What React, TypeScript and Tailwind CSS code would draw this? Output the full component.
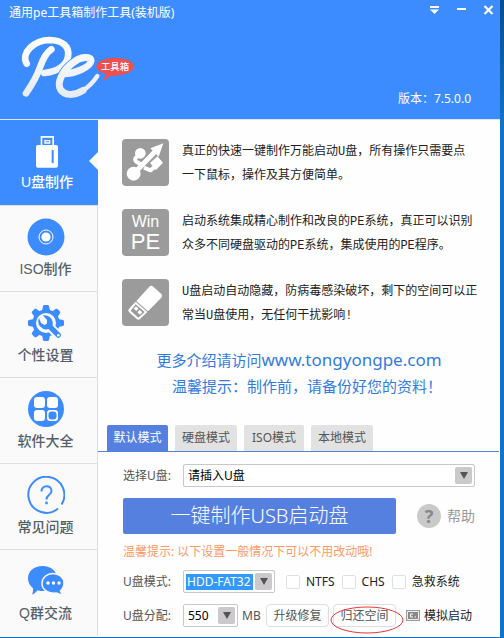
import type { ReactNode } from 'react'

const features: { icon: ReactNode; lines: string[] }[] = [
  { icon: <UsbTrident />, lines: ['真正的快速一键制作万能启动U盘，所有操作只需要点', '一下鼠标，操作及其方便简单。'] },
  { icon: <WinPe />, lines: ['启动系统集成精心制作和改良的PE系统，真正可以识别', '众多不同硬盘驱动的PE系统，集成使用的PE程序。'] },
  { icon: <FlashDrive />, lines: ['U盘启动自动隐藏，防病毒感染破坏，剩下的空间可以正', '常当U盘使用，无任何干扰影响!'] },
]

const navItems: { label: string; icon: ReactNode }[] = [
  { label: 'ISO制作', icon: <DiscIcon /> },
  { label: '个性设置', icon: <GearIcon /> },
  { label: '软件大全', icon: <AppsIcon /> },
  { label: '常见问题', icon: <QuestionIcon /> },
  { label: 'Q群交流', icon: <ChatIcon /> },
]

function Logo() {
  return (
    <svg width="120" height="68" viewBox="57 102 360 204" role="img" aria-label="Pe 工具箱">
      <defs>
        <linearGradient id="ink" gradientUnits="userSpaceOnUse" x1="0" y1="20" x2="0" y2="205">
          <stop offset="0" stopColor="#fff" />
          <stop offset="1" stopColor="#e6ebf2" />
        </linearGradient>
      </defs>
      <g transform="translate(45 90)" fill="none" strokeLinecap="round" strokeLinejoin="round">
        <path d="M35 101C16 68 60 30 103 30C146 31 164 52 159 80C154 107 130 124 88 129" stroke="url(#ink)" strokeWidth="20" />
        <path d="M109 58C93 68 84 86 75 112C66 138 50 165 33 190" stroke="url(#ink)" strokeWidth="20" />
        <path d="M149 131C177 131 226 112 228 93C229 77 196 80 174 98C142 122 124 160 137 179C149 197 178 198 204 181" stroke="#3c8cff" strokeWidth="26" strokeLinecap="butt" />
        <path d="M149 131C177 131 226 112 228 93C229 77 196 80 174 98C142 122 124 160 137 179C149 197 178 198 204 181" stroke="url(#ink)" strokeWidth="21" />
        <path d="M200 184C218 173 234 158 247 138" stroke="url(#ink)" strokeWidth="13" />
      </g>
      <path d="M309 243L318 222C300 217 289 209 289 199C289 184 314 173 345 173S402 184 402 199S377 226 345 227L332 228Z" fill="#f04f50" />
      <text x="345" y="211" textAnchor="middle" fontSize="28" fontWeight="500" fill="#fff" fontFamily="'Noto Sans CJK SC', sans-serif">工具箱</text>
    </svg>
  )
}

function UsbTrident() {
  return (
    <svg width="47" height="47" viewBox="0 0 141 141" aria-hidden="true">
      <g fill="none" stroke="#fff" strokeWidth="12" strokeLinejoin="round">
        <path d="M35 104L106 31" strokeWidth="15" />
        <path d="M54 43L41 57Q37 62 43 68L60 78" />
        <path d="M66 86L86 94L104 78" />
      </g>
      <circle cx="35" cy="104" r="21" fill="#fff" />
      <circle cx="55" cy="43" r="16" fill="#fff" />
      <path d="M124 13L85 28L110 53Z" fill="#fff" />
      <path d="M106 52L123 71L102 93L84 72Z" fill="#fff" />
    </svg>
  )
}

function WinPe() {
  return (
    <span className="flex flex-col items-center font-['Liberation_Sans',sans-serif] text-white">
      <span className="text-[16px] leading-5">Win</span>
      <span className="text-[22px] leading-5">PE</span>
    </span>
  )
}

function FlashDrive() {
  return (
    <svg width="47" height="47" viewBox="0 0 141 141" aria-hidden="true">
      <path d="M43 66L82 23Q88 17 94 23L118 45Q123 50 118 56L78 97Z" fill="#fff" />
      <path d="M41 68L76 99L54 120Q49 124 44 120L21 99Q16 94 21 89Z" fill="#fff" />
      <path d="M41 76L68 99L49 116L26 95Z" fill="#9b9b9b" />
      <path d="M42 82l8 7-7 7-8-7zM53 93l8 7-7 7-8-7z" fill="#fff" />
    </svg>
  )
}

function StickIcon() {
  return (
    <svg width="22" height="32" viewBox="0 0 66 96" aria-hidden="true">
      <path fill="#fff" fillRule="evenodd" d="M14 0H54V27H60Q66 27 66 33V89Q66 95 60 95H6Q0 95 0 89V33Q0 27 6 27H14ZM19 5V27H49V5Z" />
      <path fill="#fff" fillRule="evenodd" d="M25 12H43V23H25ZM29 16V19H39V16Z" />
      <path d="M50 44V79" stroke="#3c8cff" strokeWidth="6" strokeLinecap="round" />
    </svg>
  )
}

function DiscIcon() {
  return (
    <svg width="38" height="38" viewBox="0 0 38 38" aria-hidden="true">
      <circle cx="19" cy="19" r="18.5" fill="#3c8cff" />
      <circle cx="19" cy="19" r="7" fill="none" stroke="#fff" />
      <circle cx="19" cy="19" r="4.6" fill="#fff" />
    </svg>
  )
}

function GearIcon() {
  return (
    <svg width="38" height="38" viewBox="0 0 38 38" aria-hidden="true">
      <g fill="#3c8cff">
        <circle cx="19" cy="19" r="13.6" />
        {[0, 45, 90, 135, 180, 225, 270, 315].map((a) => (
          <path key={a} d="M15 7L16 2Q16.300 1 17.300 1H20.700Q21.700 1 22 2L23 7Z" transform={`rotate(${a} 19 19)`} />
        ))}
      </g>
      <circle cx="19" cy="19" r="10" fill="#fafafa" />
      <path d="M18 18L32 32" stroke="#fafafa" strokeWidth="9" strokeLinecap="round" />
      <path d="M12 14A8 8 0 0 0 21.500 25L29.500 33A2.600 2.600 0 0 0 33.200 29.300L25.500 21.500A8 8 0 0 0 16 11.500L20 16V19.500L17.500 21L14 19Z" fill="#3c8cff" />
      <circle cx="31.300" cy="31.300" r="1.300" fill="#fafafa" />
    </svg>
  )
}

function AppsIcon() {
  return (
    <svg width="38" height="38" viewBox="0 0 38 38" aria-hidden="true">
      <circle cx="19" cy="19" r="18" fill="#3c8cff" />
      <g fill="#fff">
        <rect x="7" y="7" width="11" height="11" rx="3" />
        <rect x="20" y="7" width="11" height="11" rx="3" />
        <rect x="7" y="20" width="11" height="11" rx="3" />
        <rect x="20" y="20" width="11" height="11" rx="3" />
      </g>
      <rect x="21.500" y="21.500" width="8" height="8" rx="3" fill="#3c8cff" />
    </svg>
  )
}

function QuestionIcon() {
  return (
    <svg width="38" height="38" viewBox="0 0 38 38" fill="none" stroke="#3c8cff" aria-hidden="true">
      <path d="M31 32.500A18 18 0 1 1 34.500 28.500" strokeWidth="2" />
      <path d="M14.500 15.500C14.500 8.500 24.500 8.500 24.500 15C24.500 19 19.500 18.500 19.500 23.500" strokeWidth="2" />
      <circle cx="19.500" cy="27" r="1.400" fill="#3c8cff" stroke="none" />
    </svg>
  )
}

function ChatIcon() {
  return (
    <svg width="38" height="32" viewBox="0 0 38 32" aria-hidden="true">
      <path d="M15.500 1C24 1 30 6 30 13.500S24 26 15.500 26C13 26 11.500 25.500 10.500 25.200C9 27.500 7 29 5 29.500C6 27.500 6.200 25.500 6 23.200C3 21 1 17.500 1 13.500C1 6 7 1 15.500 1Z" fill="#3c8cff" />
      <path d="M26 8.500C32 8.500 37 12.500 37 18C37 21.500 35.500 24 33.500 25.800L35.500 30.500L29.500 28C22 29 15 25 15 18.500C15 12.500 20 8.500 26 8.500Z" fill="#3c8cff" stroke="#fafafa" strokeWidth="1.500" />
      <g fill="#fff">
        <circle cx="21" cy="18" r="1.700" />
        <circle cx="26.500" cy="18" r="1.700" />
        <circle cx="32" cy="18" r="1.700" />
      </g>
    </svg>
  )
}

function Arrow() {
  return (
    <span className="pointer-events-none flex size-[17px] shrink-0 items-center justify-center rounded-xs bg-[#cbc9cb]">
      <svg width="8" height="7" viewBox="0 0 8 7" aria-hidden="true">
        <path d="M0 0H8L4 7Z" fill="#555" />
      </svg>
    </span>
  )
}

function Check({ label }: { label: string }) {
  return (
    <label className="flex items-center gap-[6px] text-[#222]">
      <input type="checkbox" className="size-[14px] appearance-none rounded-xs border border-[#e0e0e0] bg-white checked:bg-[#5580e0]" />
      {label}
    </label>
  )
}

const box = 'flex h-[23px] items-center justify-between rounded-xs border border-[#c8c8c8] bg-white px-[2px]'
const rowLabel = 'w-[60px] shrink-0 text-[#555]'
const smallButton = 'h-[23px] w-[63px] rounded-sm border border-[#dedede] bg-white text-[#555]'

export default function App() {
  return (
    <div className="flex min-h-screen flex-col bg-linear-to-b from-[#0a4c8f] to-[#0f74cc] to-20% pr-1 pb-px font-['Noto_Sans','Noto_Sans_CJK_SC',sans-serif] text-[12px] leading-4">
      <header className="flex h-[120px] flex-col border-b border-[#dbe8fa] bg-[#3c8cff] text-white">
        <div className="flex h-[26px] items-center justify-between pr-[6px] pl-[9px]">
          <h1>通用pe工具箱制作工具(装机版)</h1>
          <div className="flex gap-[15px] pb-[7px]">
            <button aria-label="菜单" className="flex w-3 justify-center">
              <svg width="11" height="10" viewBox="0 0 11 10" fill="#fff"><path d="M1 1H10V3H1ZM1 4.500H10L5.500 9Z" /></svg>
            </button>
            <button aria-label="最小化" className="flex w-3 justify-center">
              <svg width="11" height="10" viewBox="0 0 11 10" fill="#fff"><path d="M1 3H10V5H1Z" /></svg>
            </button>
            <button aria-label="关闭" className="flex w-3 justify-center">
              <svg width="11" height="10" viewBox="0 0 11 10" stroke="#fff" strokeWidth="2.200"><path d="M1.500 1L9.500 9M9.500 1L1.500 9" /></svg>
            </button>
          </div>
        </div>
        <div className="flex items-end justify-between pt-2 pr-[29px] pl-[19px]">
          <Logo />
          <p className="-mb-[5px]">版本：7.5.0.0</p>
        </div>
      </header>

      <div className="flex flex-1">
        <nav className="flex w-[98px] shrink-0 flex-col bg-[#fafafa] font-['Liberation_Sans','Noto_Sans_CJK_SC',sans-serif] text-[14px] leading-5 font-medium">
          <button className="relative flex h-[86px] flex-col items-center border-b border-[#e0e0e0] bg-[#3c8cff] pt-4 pr-1 text-white">
            <StickIcon />
            <span className="mt-1">U盘制作</span>
            <svg className="absolute top-8 right-0" width="9" height="18" viewBox="0 0 9 18" fill="#fafafa" aria-hidden="true"><path d="M9 0V18L0 9Z" /></svg>
          </button>
          {navItems.map((item) => (
            <button key={item.label} className="flex h-[86px] flex-col items-center border-r border-b border-[#dedede] pt-3 pr-[6px] text-[#555f69] last:border-b-0">
              <span className="flex h-[38px] items-center">{item.icon}</span>
              <span className="mt-[3px]">{item.label}</span>
            </button>
          ))}
        </nav>

        <main className="min-w-0 flex-1 bg-[#fefefe] pt-4">
          <div className="flex flex-col gap-[18px] pl-6">
            {features.map((f) => (
              <section key={f.lines[0]} className="flex items-center gap-[13px]">
                <div className="flex size-[47px] shrink-0 items-center justify-center rounded-[4px] bg-[#9b9b9b]">{f.icon}</div>
                <p className="pt-1 font-['Liberation_Mono','Noto_Sans_CJK_SC',monospace] leading-6 whitespace-nowrap text-[#222]">
                  {f.lines[0]}<br />{f.lines[1]}
                </p>
              </section>
            ))}
          </div>

          <div className="mt-[19px] text-center text-[15px] leading-[26px] text-[#347be0]">
            <p>更多介绍请访问<a href="#site" className="text-[17px]">www.tongyongpe.com</a></p>
            <p className="pl-4">温馨提示：制作前，请备份好您的资料！</p>
          </div>

          <div role="tablist" className="mt-[26px] mr-px flex gap-[7px] border-b border-[#5580e0] pl-[9px] text-[#555]">
            <button role="tab" aria-selected="true" className="h-[26px] w-[61px] rounded-t-xs bg-[#5580e0] text-white">默认模式</button>
            <button role="tab" aria-selected="false" className="h-[26px] w-[62px] rounded-t-xs bg-[#e2e2e2]">硬盘模式</button>
            <button role="tab" aria-selected="false" className="h-[26px] w-[60px] rounded-t-xs bg-[#e2e2e2]">ISO模式</button>
            <button role="tab" aria-selected="false" className="h-[26px] w-[62px] rounded-t-xs bg-[#e2e2e2]">本地模式</button>
          </div>

          <form className="flex flex-col pt-3 pr-[25px] pl-[25px]" onSubmit={(e) => e.preventDefault()}>
            <div className="flex items-center">
              <label htmlFor="drive" className={rowLabel}>选择U盘:</label>
              <div className={`${box} flex-1`}>
                <select id="drive" className="flex-1 appearance-none pl-[2px] text-black"><option>请插入U盘</option></select>
                <Arrow />
              </div>
            </div>
            <div className="mt-[11px] flex items-center justify-between">
              <button className="h-9 w-[273px] rounded-xs bg-[#5580e0] text-[20px] leading-7 font-light text-white">一键制作USB启动盘</button>
              <button type="button" className="flex items-center gap-[6px] text-[14px] text-[#999]">
                <span className="flex size-6 items-center justify-center rounded-full bg-[#c9c9c9] text-[18px] font-bold text-[#888]">?</span>
                帮助
              </button>
            </div>
            <p className="mt-[10px] text-[#ff9966]">温馨提示: 以下设置一般情况下可以不用改动哦!</p>
            <div className="mt-[10px] flex items-center">
              <label htmlFor="mode" className={rowLabel}>U盘模式:</label>
              <div className={`${box} w-[92px]`}>
                <select id="mode" className="w-[67px] appearance-none bg-[#3399ff] pl-px text-white"><option>HDD-FAT32</option></select>
                <Arrow />
              </div>
              <div className="ml-[11px] flex gap-[7px]">
                <Check label="NTFS" />
                <Check label="CHS" />
                <Check label="急救系统" />
              </div>
            </div>
            <div className="mt-[11px] flex items-center">
              <label htmlFor="size" className={rowLabel}>U盘分配:</label>
              <div className={`${box} w-[55px]`}>
                <select id="size" className="w-8 appearance-none pl-[2px] text-black"><option>550</option></select>
                <Arrow />
              </div>
              <span className="w-7 pl-1 text-[#555]">MB</span>
              <button type="button" className={smallButton}>升级修复</button>
              <span className="relative ml-1">
                <button type="button" className={smallButton}>归还空间</button>
                <svg className="pointer-events-none absolute top-[2px] -left-[3px]" width="74" height="28" viewBox="0 0 74 28" fill="none" stroke="#e8383d" aria-hidden="true"><ellipse cx="37" cy="14" rx="36" ry="13" /></svg>
              </span>
              <button type="button" className="ml-[10px] flex items-center gap-1 whitespace-nowrap text-[#222]">
                <svg width="14" height="11" viewBox="0 0 14 11" aria-hidden="true">
                  <path d="M0 0H14V11H0Z" fill="#999" /><path d="M1.500 1.500H12.500V9.500H1.500Z" stroke="#eee" fill="#888" />
                  <path d="M7 4H4.500V7H7M8.500 7H10" stroke="#fff" fill="none" />
                </svg>
                模拟启动
              </button>
            </div>
          </form>
        </main>
      </div>
    </div>
  )
}
